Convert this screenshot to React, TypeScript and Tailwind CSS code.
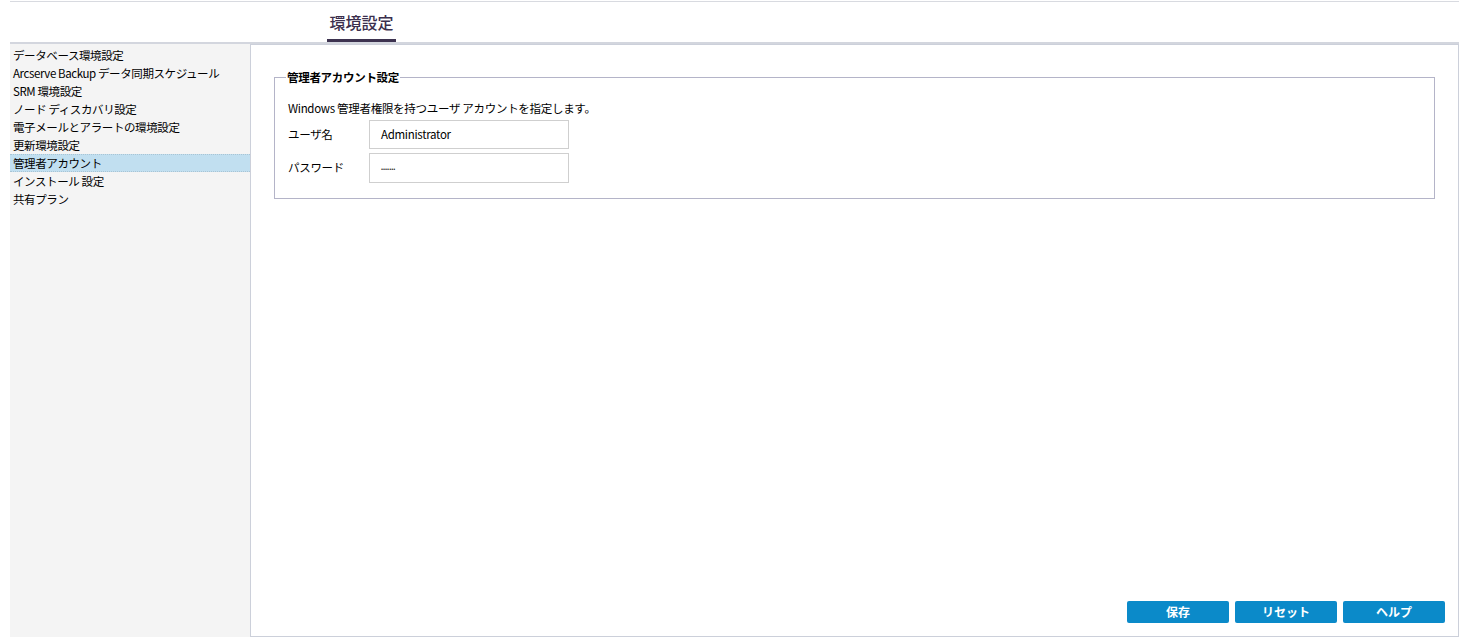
const menuItems = [
  "データベース環境設定",
  "Arcserve Backup データ同期スケジュール",
  "SRM 環境設定",
  "ノード ディスカバリ設定",
  "電子メールとアラートの環境設定",
  "更新環境設定",
  "管理者アカウント",
  "インストール 設定",
  "共有プラン",
];

const font = { fontFamily: '"Noto Sans CJK JP", "Liberation Sans", sans-serif' };

export default function App() {
  const selected = "管理者アカウント";

  return (
    <div className="w-[1465px] h-[641px] bg-white text-black overflow-hidden" style={font}>
      <div className="pl-[10px] pr-[6px]">
        <div className="mt-px h-px bg-[#d8dae0]" />

        {/* header tab */}
        <div className="h-[40px] flex items-end pl-[317px]">
          <div className="flex flex-col items-center w-[69px]">
            <span className="text-[16px] leading-[20px] text-[#3b2f4d] font-medium">環境設定</span>
            <div className="mt-[7px] h-[3px] w-full bg-[#3d3350]" />
          </div>
        </div>
        <div className="h-[2px] bg-[#d3d6de]" />

        <div className="flex h-[593px]">
          {/* sidebar */}
          <div className="w-[240px] bg-[#f4f4f4] pt-[2px] flex flex-col text-[11.5px] tracking-[-0.4px]">
            {menuItems.map((item) => (
              <div
                key={item}
                className={
                  item === selected
                    ? "h-[18px] pl-[3px] leading-[17px] bg-[#c1dff0] border-y border-dotted border-[#a9c4d4] whitespace-nowrap"
                    : "h-[18px] pl-[3px] leading-[18px] whitespace-nowrap"
                }
              >
                {item}
              </div>
            ))}
          </div>

          {/* content */}
          <div className="flex-1 border border-[#ccd0da] flex flex-col px-[23px] pt-[25px] pb-[13px]">
            <fieldset className="border border-[#b4b4c8] px-[13px] pt-[4px] pb-[15px] min-w-0 text-[11.5px] tracking-[-0.3px]">
              <legend className="ml-[-2px] px-[1px] font-bold leading-[14px]">管理者アカウント設定</legend>
              <div className="leading-[16px] mt-[12px]">Windows 管理者権限を持つユーザ アカウントを指定します。</div>
              <div className="flex items-center mt-[4px]">
                <span className="w-[81px]">ユーザ名</span>
                <div className="w-[200px] h-[29px] border border-[#cfcfcf] flex items-center pl-[11px]">Administrator</div>
              </div>
              <div className="flex items-center mt-[4px]">
                <span className="w-[81px]">パスワード</span>
                <div className="w-[200px] h-[30px] border border-[#cfcfcf] flex items-center pl-[11px] text-[6px] tracking-[0px] text-[#333]">•••••••</div>
              </div>
            </fieldset>

            <div className="mt-auto flex justify-end gap-[6px] mr-[-10px]">
              {["保存", "リセット", "ヘルプ"].map((b) => (
                <button
                  key={b}
                  className="w-[102px] h-[22px] rounded-[2px] bg-[#0b8ac9] text-white text-[12px] font-bold leading-none"
                >
                  {b}
                </button>
              ))}
            </div>
          </div>
        </div>
      </div>
    </div>
  );
}
